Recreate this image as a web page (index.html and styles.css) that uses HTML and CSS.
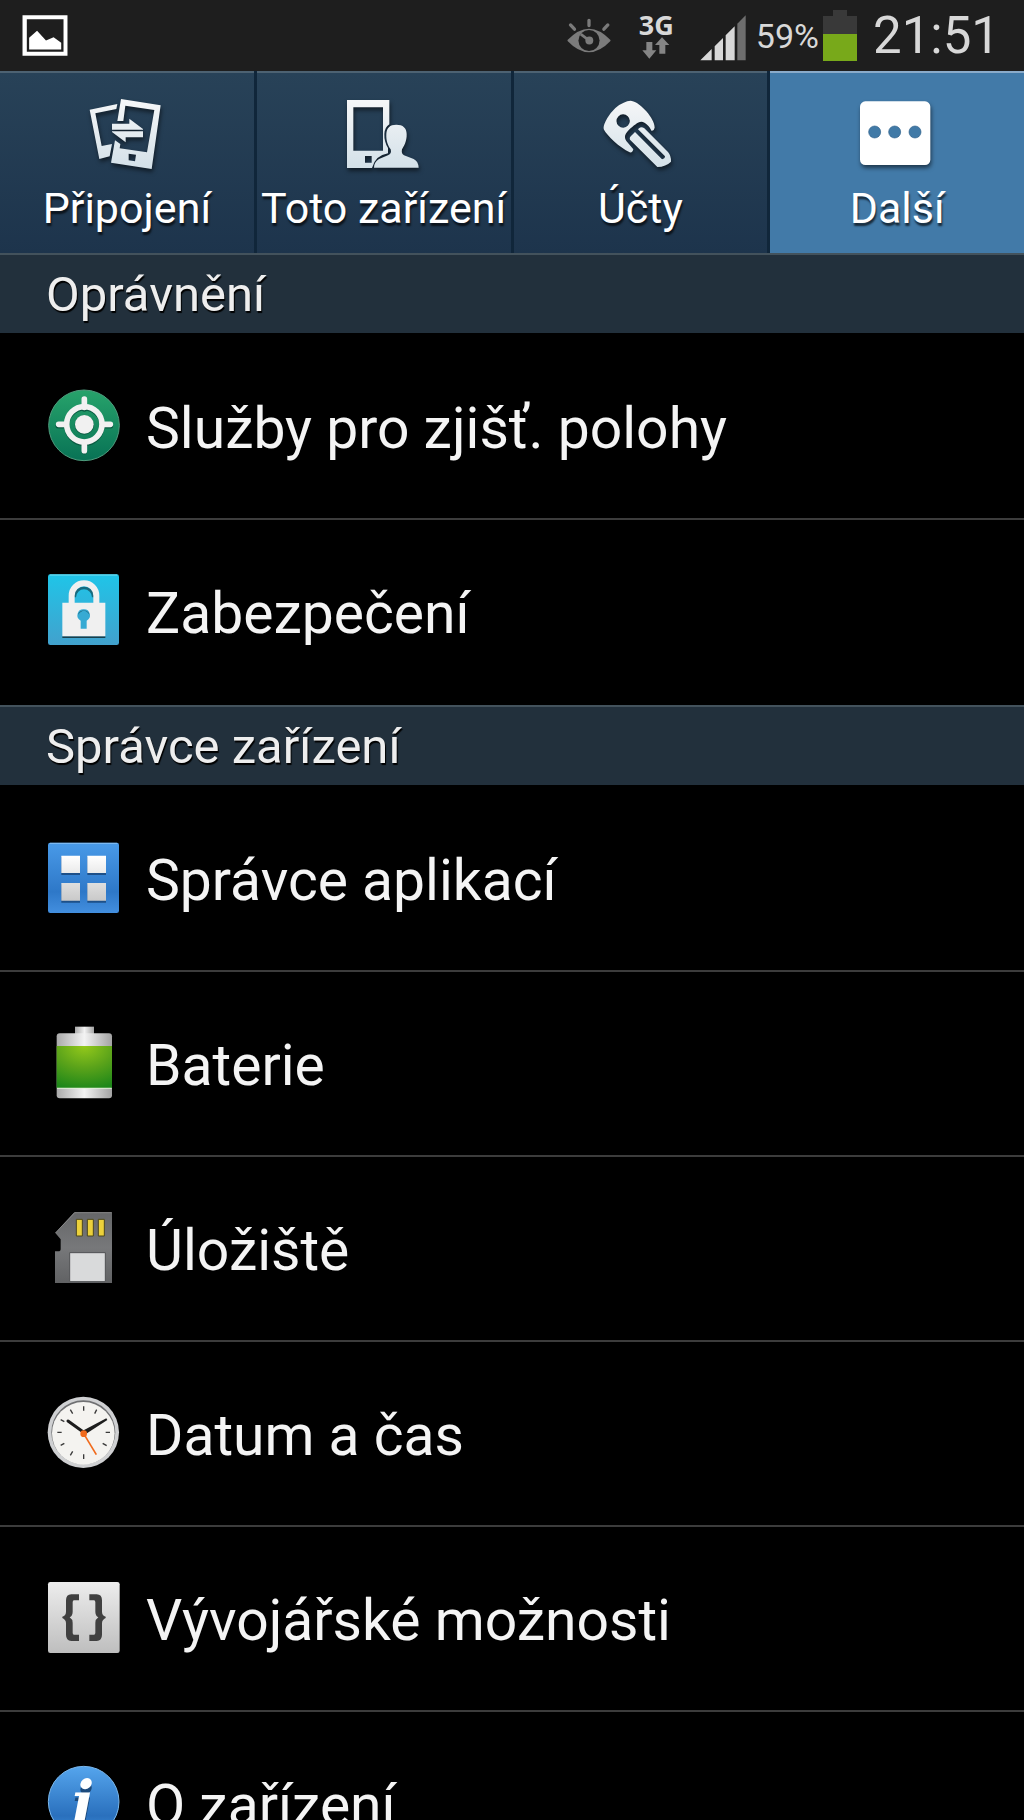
FILE: index.html
```html
<!DOCTYPE html>
<html lang="cs">
<head>
<meta charset="utf-8">
<meta name="viewport" content="width=device-width, initial-scale=1">
<title>Nastavení</title>
<link rel="stylesheet" href="styles.css">
</head>
<body>
<div class="screen">
  <header class="status">
    <svg class="status-picture" viewBox="66 44 138 124" aria-hidden="true">
      <path fill="#fff" fill-rule="evenodd" d="M67 45H203V167H67ZM80 57V155H191V57Z"/>
      <path fill="#fff" d="M87 113 111 92 138 121 161 111 184 128V148H87Z"/>
    </svg>
    <div class="status-right">
      <svg class="status-eye" viewBox="79 52 132 106" aria-hidden="true">
        <g fill="none" stroke="#7b7b7b" stroke-width="10" stroke-linecap="round"><path d="M145 59V75M89 73 101 86M202 73 190 86"/></g>
        <path fill="#7b7b7b" d="M80 119Q145 50 210 119V122Q145 190 80 122Z"/>
        <circle cx="145" cy="120" r="32" fill="#1e1e1e"/>
        <circle cx="146" cy="120" r="12" fill="#7b7b7b"/>
        <path d="M120 101 144 119" stroke="#7b7b7b" stroke-width="8"/>
      </svg>
      <div class="network">
        <span>3G</span>
        <svg class="network-arrows" viewBox="316 114 84 66" aria-hidden="true">
          <path fill="#858585" d="M329 129H347V154H359L338 179 317 154H329ZM376 115 398 138H386V164H368V138H355Z"/>
        </svg>
      </div>
      <svg class="status-signal" viewBox="484 44 138 138" aria-hidden="true">
        <path fill="#d8d8d8" d="M485 180 519 146V180ZM528 180V138L553 113V180ZM561 180V105L588 78V180Z"/>
        <path fill="#6e6e6e" d="M596 180V70L621 45V180Z"/>
      </svg>
      <span class="percent">59%</span>
      <svg class="status-battery" viewBox="855 30 102 153" aria-hidden="true">
        <path fill="#393939" d="M855 48H885V30H927V48H957V110H855Z"/>
        <path fill="#78a91a" d="M855 102H957V183H855Z"/>
      </svg>
      <time class="clock">21:51</time>
    </div>
  </header>

  <div class="tabs" role="tablist">
    <button class="tab" type="button" role="tab">
      <svg class="tab-icon" viewBox="264 105 234 234" aria-hidden="true">
        <defs><linearGradient id="metal" gradientUnits="userSpaceOnUse" x1="0" y1="115" x2="0" y2="327"><stop offset="0" stop-color="#f6f7f8"/><stop offset="1" stop-color="#d3e0e8"/></linearGradient></defs>
        <path fill="url(#metal)" d="M269 149 352 132 349 147 286 160 305 258 336 252 329 289 298 297Z"/>
        <path fill="url(#metal)" fill-rule="evenodd" d="M363 117 482 136 455 327 333 308 345 241 361 252 359 265 441 277 463 150 376 137 370 183H352ZM386 281V301L405 304 408 284Z"/>
        <path fill="url(#metal)" d="M336 191H388V176L429 207V209H336ZM429 214V232H377V247L336 216V214Z"/>
      </svg>
      <span>Připojení</span>
    </button>
    <button class="tab" type="button" role="tab">
      <svg class="tab-icon" viewBox="1034 105 234 234" aria-hidden="true">
        <path fill="url(#metal)" fill-rule="evenodd" d="M1040 120H1167V193Q1153 202 1152 222 1151 245 1163 264V280Q1125 286 1115 324H1040ZM1059 142V272H1148V142ZM1094 288V308H1114V288Z"/>
        <path fill="url(#metal)" d="M1188 194C1208 194 1219 204 1219 222C1220 244 1210 260 1205 268Q1202 281 1211 286L1240 297Q1254 304 1255 323H1121Q1121 306 1136 297L1163 286Q1175 281 1171 268C1163 258 1157 243 1158 222C1159 204 1168 194 1188 194Z"/>
      </svg>
      <span>Toto zařízení</span>
    </button>
    <button class="tab" type="button" role="tab">
      <svg class="tab-icon" viewBox="274 105 234 234" aria-hidden="true">
        <path fill="url(#metal)" fill-rule="evenodd" d="M363 122C380 124 397 139 410 154C424 171 435 188 435 203Q434 211 426 213C420 200 408 186 395 185C384 185 371 198 358 209C346 221 342 232 350 243L371 268Q369 279 360 277C330 262 292 227 283 209Q278 200 293 174Q315 138 342 128Q353 122 363 122ZM340 163A20 20 0 1 0 341 203A20 20 0 1 0 340 163Z"/>
        <path fill="url(#metal)" d="M388 205Q395 199 404 205L475 276Q485 288 484 305Q469 320 443 321L361 239Q358 232 367 225L376 216 457 298Q466 296 466 289L385 208Z"/>
      </svg>
      <span>Účty</span>
    </button>
    <button class="tab tab-active" type="button" role="tab" aria-selected="true">
      <svg class="tab-icon" viewBox="1044 105 234 234" aria-hidden="true">
        <rect x="1050" y="124" width="211" height="191" rx="16" fill="#fff"/>
        <g fill="#417aa7" stroke="#2f618b" stroke-width="2"><circle cx="1094" cy="216" r="18"/><circle cx="1154" cy="216" r="18"/><circle cx="1215" cy="216" r="18"/></g>
      </svg>
      <span>Další</span>
    </button>
  </div>

  <main class="settings">
    <section>
      <h2 class="heading">Oprávnění</h2>
      <ul class="list">
        <li><a class="row" href="#poloha">
          <svg class="row-icon" viewBox="51 57 216 216" aria-hidden="true">
            <defs><linearGradient id="green" x2="0" y2="1"><stop stop-color="#27a36b"/><stop offset="1" stop-color="#087255"/></linearGradient></defs>
            <circle cx="162" cy="166" r="106" fill="url(#green)" stroke="#4f9c7d" stroke-width="3"/>
            <g fill="none" stroke="#0a5b42" stroke-width="15" stroke-linecap="round"><circle cx="163" cy="168" r="53"/><path d="M163 90V118M163 224V246M84 168H108M218 168H242"/></g>
            <g fill="none" stroke="#f1f1f1" stroke-width="17" stroke-linecap="round"><circle cx="163" cy="163" r="53"/><path d="M163 87V112M163 218V242M86 163H108M218 163H241"/></g>
            <circle cx="163" cy="165" r="29" fill="#0a5b42"/><circle cx="163" cy="163" r="28" fill="#f1f1f1"/>
          </svg>
          <span>Služby pro zjišť. polohy</span></a></li>
        <li><a class="row" href="#zabezpeceni">
          <svg class="row-icon" viewBox="51 42 216 216" aria-hidden="true">
            <defs><linearGradient id="cyan" x2="0" y2="1"><stop stop-color="#1fc5e8"/><stop offset="1" stop-color="#42a1cd"/></linearGradient></defs>
            <rect x="54" y="43" width="213" height="212" rx="7" fill="url(#cyan)"/>
            <path d="M59 45H262" stroke="#7bdff2" stroke-width="3"/>
            <path d="M97 229H226V234H97Z" fill="#173e4b"/>
            <path d="M134 112A28 28 0 0 1 190 112" fill="none" stroke="#176a7e" stroke-width="8"/>
            <path d="M125 133V107A37 37 0 0 1 199 107V133" fill="none" stroke="#f0f0f0" stroke-width="18"/>
            <path d="M97 128H226V229H97Z" fill="#f0f0f0"/>
            <path d="M161 148A18 18 0 0 0 152 182V206H170V182A18 18 0 0 0 161 148Z" fill="#37aad3"/>
            <path d="M144 165A18 18 0 0 1 179 165Q162 140 144 165Z" fill="#17566b"/>
          </svg>
          <span>Zabezpečení</span></a></li>
      </ul>
    </section>
    <section>
      <h2 class="heading">Správce zařízení</h2>
      <ul class="list">
        <li><a class="row" href="#aplikace">
          <svg class="row-icon" viewBox="51 453 216 216" aria-hidden="true">
            <defs><linearGradient id="blue" x2="0" y2="1"><stop stop-color="#499ae8"/><stop offset=".7" stop-color="#2e78c8"/><stop offset="1" stop-color="#438fdf"/></linearGradient>
            <linearGradient id="tile" gradientUnits="userSpaceOnUse" x1="0" y1="497" x2="0" y2="632"><stop stop-color="#fff"/><stop offset="1" stop-color="#c9c9c9"/></linearGradient></defs>
            <rect x="54" y="458" width="213" height="211" rx="7" fill="url(#blue)"/>
            <path d="M59 460H262" stroke="#86bff2" stroke-width="3"/>
            <path fill="#1d5089" d="M94 501H150V555H94ZM172 501H228V555H172ZM94 583H150V638H94ZM172 583H228V638H172Z"/>
            <path fill="url(#tile)" d="M94 497H150V549H94ZM172 497H228V549H172ZM94 579H150V632H94ZM172 579H228V632H172Z"/>
          </svg>
          <span>Správce aplikací</span></a></li>
        <li><a class="row" href="#baterie">
          <svg class="row-icon" viewBox="51 48 216 216" aria-hidden="true">
            <defs><linearGradient id="silver"><stop stop-color="#aaa"/><stop offset=".5" stop-color="#f3f3f3"/><stop offset="1" stop-color="#a3a3a3"/></linearGradient>
            <radialGradient id="charge" cx=".5" cy="0" r="1.05"><stop stop-color="#94c91b"/><stop offset=".5" stop-color="#5ba31a"/><stop offset="1" stop-color="#1d8719"/></radialGradient></defs>
            <path fill="url(#silver)" d="M135 50H192V75H135Z"/>
            <rect x="80" y="70" width="166" height="195" rx="9" fill="url(#silver)"/>
            <path fill="url(#charge)" d="M80 108H246V234H80Z"/>
            <path fill="#e2f3d7" d="M81 233H245V236H81Z"/>
          </svg>
          <span>Baterie</span></a></li>
        <li><a class="row" href="#uloziste">
          <svg class="row-icon" viewBox="51 63 216 216" aria-hidden="true">
            <defs><linearGradient id="card" x2="0" y2="1"><stop stop-color="#666769"/><stop offset=".5" stop-color="#77787a"/><stop offset="1" stop-color="#616264"/></linearGradient></defs>
            <path fill="url(#card)" d="M133 67H246V279H75V184H88Q92 183 92 178V148L76 129Z"/>
            <path fill="none" stroke="#a0a0a0" stroke-width="2" d="M76 129 134 68H245"/>
            <path fill="#ecd13b" stroke="#4b461f" stroke-width="3" d="M139 88H157V138H139ZM172 88H190V138H172ZM205 88H223V138H205Z"/>
            <path fill="#d9dadb" stroke="#505153" stroke-width="3" d="M119 188H226V275H119Z"/>
          </svg>
          <span>Úložiště</span></a></li>
        <li><a class="row" href="#cas">
          <svg class="row-icon" viewBox="51 48 216 216" aria-hidden="true">
            <circle cx="160" cy="157" r="107" fill="#cfd0d2"/>
            <circle cx="160" cy="157" r="96" fill="#6f7072"/>
            <circle cx="160" cy="160" r="94" fill="#f4f3f0"/>
            <path fill="none" stroke="#3a3a3a" stroke-width="4" d="M161 79V92M161 223V237M82 157H95M227 157H240M121 89 128 101M200 89 194 101M92 119 103 125M92 196 103 190M121 226 128 214M218 190 230 197"/>
            <path stroke="#1d1d1d" stroke-width="9" stroke-linecap="round" d="M114 123 161 157"/>
            <path fill="#1d1d1d" d="M158 152 229 115 232 120 164 164Z"/>
            <path fill="none" stroke="#f06a1c" stroke-width="5" d="M161 161 199 224"/>
            <circle cx="161" cy="161" r="10" fill="#f06a1c"/>
          </svg>
          <span>Datum a čas</span></a></li>
        <li><a class="row" href="#vyvojar">
          <svg class="row-icon" viewBox="51 63 216 216" aria-hidden="true">
            <defs><linearGradient id="plate" x2="0" y2="1"><stop stop-color="#ededed"/><stop offset="1" stop-color="#bebebe"/></linearGradient></defs>
            <rect x="54" y="66" width="215" height="213" rx="7" fill="url(#plate)"/>
            <path fill="#404040" d="M147 103V121H132Q128 121 128 127V155Q128 167 119 172Q128 178 128 188V218Q128 224 132 224H147V243H124Q108 242 108 224V190Q108 179 97 174V170Q108 167 108 155V121Q108 103 124 103ZM178 103V121H192Q196 121 196 127V155Q196 167 205 172Q196 178 196 188V218Q196 224 192 224H178V243H200Q216 242 216 224V190Q216 179 227 174V170Q216 167 216 155V121Q216 103 200 103Z"/>
          </svg>
          <span>Vývojářské možnosti</span></a></li>
        <li><a class="row" href="#zarizeni">
          <svg class="row-icon" viewBox="51 198 216 216" aria-hidden="true">
            <defs><linearGradient id="info" x2="0" y2="1"><stop stop-color="#55a5ed"/><stop offset=".7" stop-color="#2a70bd"/><stop offset="1" stop-color="#4190dc"/></linearGradient></defs>
            <circle cx="161" cy="305" r="106" fill="url(#info)" stroke="#7ab7ec" stroke-width="3"/>
            <text class="info-letter" x="159" y="372" text-anchor="middle">i</text>
          </svg>
          <span>O zařízení</span></a></li>
      </ul>
    </section>
  </main>
</div>
</body>
</html>
```
FILE: styles.css
```css
* { box-sizing: border-box; }

body {
  margin: 0;
  background: #000;
  color: #f4f4f4;
  font-family: Roboto, "Noto Sans", sans-serif;
}

.screen {
  display: flex;
  flex-direction: column;
  height: 100vh;
  overflow: hidden;
}

/* Status bar */
.status {
  display: flex;
  flex: none;
  align-items: center;
  justify-content: space-between;
  height: 71px;
  padding: 0 24px 0 22px;
  background: #1e1e1e;
  color: #d8d8d8;
}
.status-picture { width: 46px; height: 41px; }
.status-right { display: flex; align-items: center; }
.status-eye { width: 44px; height: 35px; margin-right: 28px; }
.network {
  display: flex;
  flex-direction: column;
  align-items: center;
  margin-right: 26px;
  font: bold 27px/24px "Open Sans", sans-serif;
}
.network-arrows { width: 28px; height: 22px; }
.status-signal { width: 46px; height: 46px; margin: 4px 10px 0 0; }
.percent { margin-right: 4px; font-size: 34px; line-height: 40px; }
.status-battery { width: 34px; height: 51px; margin-right: 16px; }
.clock { font-size: 51px; line-height: 60px; }

/* Tabs */
.tabs {
  display: grid;
  flex: none;
  grid-template-columns: repeat(4, 1fr);
  gap: 3px;
  background: #10263a;
}
.tab {
  display: flex;
  flex-direction: column;
  align-items: center;
  height: 182px;
  padding: 22px 0 0;
  border: 0;
  border-top: 2px solid #4d6272;
  background: linear-gradient(#284258, #1d344c);
  color: #fff;
  font: 43px/50px Roboto, "Noto Sans", sans-serif;
  text-shadow: 1px 3px 2px #000a;
  white-space: nowrap;
}
.tab-active {
  border-top-color: #8aabca;
  background: #427aa8;
}
.tab-icon {
  flex: none;
  width: 78px;
  height: 78px;
  margin-bottom: 10px;
  filter: drop-shadow(1px 3px 2px #0008);
}

/* Settings list */
.settings {
  flex: 1;
  min-height: 0;
  overflow-y: auto;
  scrollbar-width: none;
}
.heading {
  height: 80px;
  margin: 0;
  padding: 0 46px;
  border-top: 2px solid #43525c;
  background: #22303c;
  color: #eee;
  font-size: 49px;
  font-weight: 400;
  line-height: 80px;
  text-shadow: 1px 2px 1px #000;
}
.list {
  margin: 0;
  padding: 2px 0 0;
  list-style: none;
}
.row {
  display: flex;
  gap: 27px;
  height: 185px;
  padding: 54px 47px 0;
  border-bottom: 2px solid #3c3c3c;
  color: inherit;
  font-size: 57px;
  line-height: 80px;
  text-decoration: none;
  white-space: nowrap;
}
li:last-child .row { border-bottom-color: transparent; }
.row-icon { flex: none; width: 72px; height: 72px; overflow: visible; }

.info-letter {
  fill: #fff;
  font: italic bold 178px "DejaVu Serif", serif;
  text-shadow: 0 5px 0 #1c4a7c;
}
```
